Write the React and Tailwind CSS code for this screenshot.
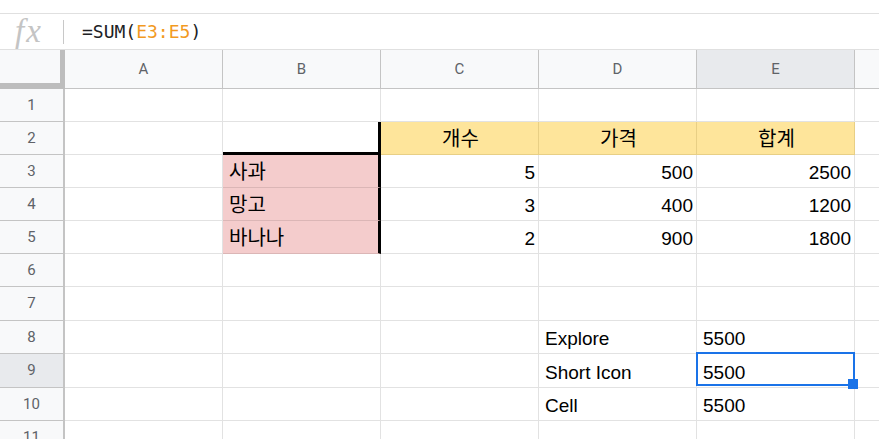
import React from 'react';

const COLS = ['A', 'B', 'C', 'D', 'E'];

// row heights follow the screenshot's grid (scaled sheet, so 33/34 px)
const ROWS = [
    { n: 1, h: 'h-[33px]' },
    { n: 2, h: 'h-[33px]' },
    { n: 3, h: 'h-[33px]' },
    { n: 4, h: 'h-[33px]' },
    { n: 5, h: 'h-[33px]' },
    { n: 6, h: 'h-[33px]' },
    { n: 7, h: 'h-[34px]' },
    { n: 8, h: 'h-[33px]' },
    { n: 9, h: 'h-[34px]' },
    { n: 10, h: 'h-[33px]' },
    { n: 11, h: 'h-[33px]' },
];

const CELLS = {
    B2: { kind: 'corner' },
    C2: { t: '개수', kind: 'head' },
    D2: { t: '가격', kind: 'head' },
    E2: { t: '합계', kind: 'head' },
    B3: { t: '사과', kind: 'fruit' },
    B4: { t: '망고', kind: 'fruit' },
    B5: { t: '바나나', kind: 'fruit' },
    C3: { t: '5', right: true },
    D3: { t: '500', right: true },
    E3: { t: '2500', right: true },
    C4: { t: '3', right: true },
    D4: { t: '400', right: true },
    E4: { t: '1200', right: true },
    C5: { t: '2', right: true },
    D5: { t: '900', right: true },
    E5: { t: '1800', right: true },
    D8: { t: 'Explore' },
    E8: { t: '5500' },
    D9: { t: 'Short Icon' },
    E9: { t: '5500', selected: true },
    D10: { t: 'Cell' },
    E10: { t: '5500' },
};

const KIND = {
    plain: 'border-r border-b border-[#e2e2e2] bg-white',
    head: 'border-r border-b border-[#e8cf85] bg-[#fee59b] justify-center',
    corner: 'border-r-[3px] border-b-[3px] border-black bg-white',
    fruit: 'border-r-[3px] border-b border-r-black border-b-[#dbb6b6] bg-[#f4cccc]',
};

const latin = { fontFamily: '"Liberation Sans", "Noto Sans CJK KR", Arial, sans-serif' };
const korean = { fontFamily: '"Noto Sans CJK KR", "Liberation Sans", sans-serif' };
const ui = { fontFamily: 'Roboto, "Liberation Sans", sans-serif' };

function Cell({ id }) {
    const c = CELLS[id] || {};
    const kind = KIND[c.kind || 'plain'];
    const isKo = c.kind === 'head' || c.kind === 'fruit';
    return (
        <div
            className={`relative flex h-full w-[158px] shrink-0 items-end pb-[3px] leading-[22px] text-black ${kind} ${c.right ? 'justify-end pl-[6px] pr-[3px]' : 'pl-[6px] pr-[4px]'} ${isKo ? 'text-[20px] pl-[4px]' : 'text-[19px]'}`}
            style={isKo ? korean : latin}
        >
            {c.t && <span className={isKo ? 'leading-[26px]' : ''}>{c.t}</span>}
            {c.selected && (
                <>
                    <div className="absolute -left-[1px] -top-[2px] -right-[1px] bottom-[1px] z-10 border-2 border-[#1a73e8]" />
                    <div className="absolute -right-[4px] -bottom-[2px] z-20 h-[10px] w-[10px] bg-[#1a73e8]" />
                </>
            )}
        </div>
    );
}

export default function App() {
    return (
        <div className="h-[439px] w-[879px] overflow-hidden bg-white">
            <div className="h-[13px]" />

            {/* Formula bar */}
            <div className="flex h-[37px] items-center border-y border-[#e0e0e0]">
                <div className="flex w-[63px] justify-start pl-[15px]">
                    <span
                        className="text-[33px] italic leading-none tracking-[2px] text-[#c4c4c4]"
                        style={{ fontFamily: '"Liberation Serif", "DejaVu Serif", serif' }}
                    >
                        fx
                    </span>
                </div>
                <div className="h-[24px] w-px bg-[#c8c8c8]" />
                <div
                    className="ml-[18px] text-[18px] text-[#202124]"
                    style={{ fontFamily: '"DejaVu Sans Mono", "Liberation Mono", monospace' }}
                >
                    =SUM(<span className="text-[#f29a1f]">E3:E5</span>)
                </div>
            </div>

            {/* Column headers */}
            <div className="flex h-[39px]" style={ui}>
                <div className="h-full w-[65px] shrink-0 border-r-[5px] border-b-[6px] border-[#bdbdbd] bg-[#f8f9fa]" />
                {COLS.map((col) => (
                    <div
                        key={col}
                        className={`flex h-full w-[158px] shrink-0 items-center justify-center border-r border-b border-[#c4c4c4] text-[15px] text-[#5f6368] ${col === 'E' ? 'bg-[#e8eaed]' : 'bg-[#f8f9fa]'}`}
                    >
                        {col}
                    </div>
                ))}
                <div className="h-full flex-1 border-b border-[#c4c4c4] bg-[#f8f9fa]" />
            </div>

            {/* Grid */}
            {ROWS.map((row) => (
                <div key={row.n} className={`flex ${row.h}`}>
                    <div
                        className={`flex h-full w-[65px] shrink-0 items-center justify-center border-r-2 border-b border-[#c4c4c4] text-[15px] text-[#5f6368] ${row.n === 9 ? 'bg-[#e8eaed]' : 'bg-[#f8f9fa]'}`}
                        style={ui}
                    >
                        {row.n}
                    </div>
                    {COLS.map((col) => (
                        <Cell key={col} id={`${col}${row.n}`} />
                    ))}
                    <div className="h-full flex-1 border-b border-[#e2e2e2] bg-white" />
                </div>
            ))}
        </div>
    );
}
